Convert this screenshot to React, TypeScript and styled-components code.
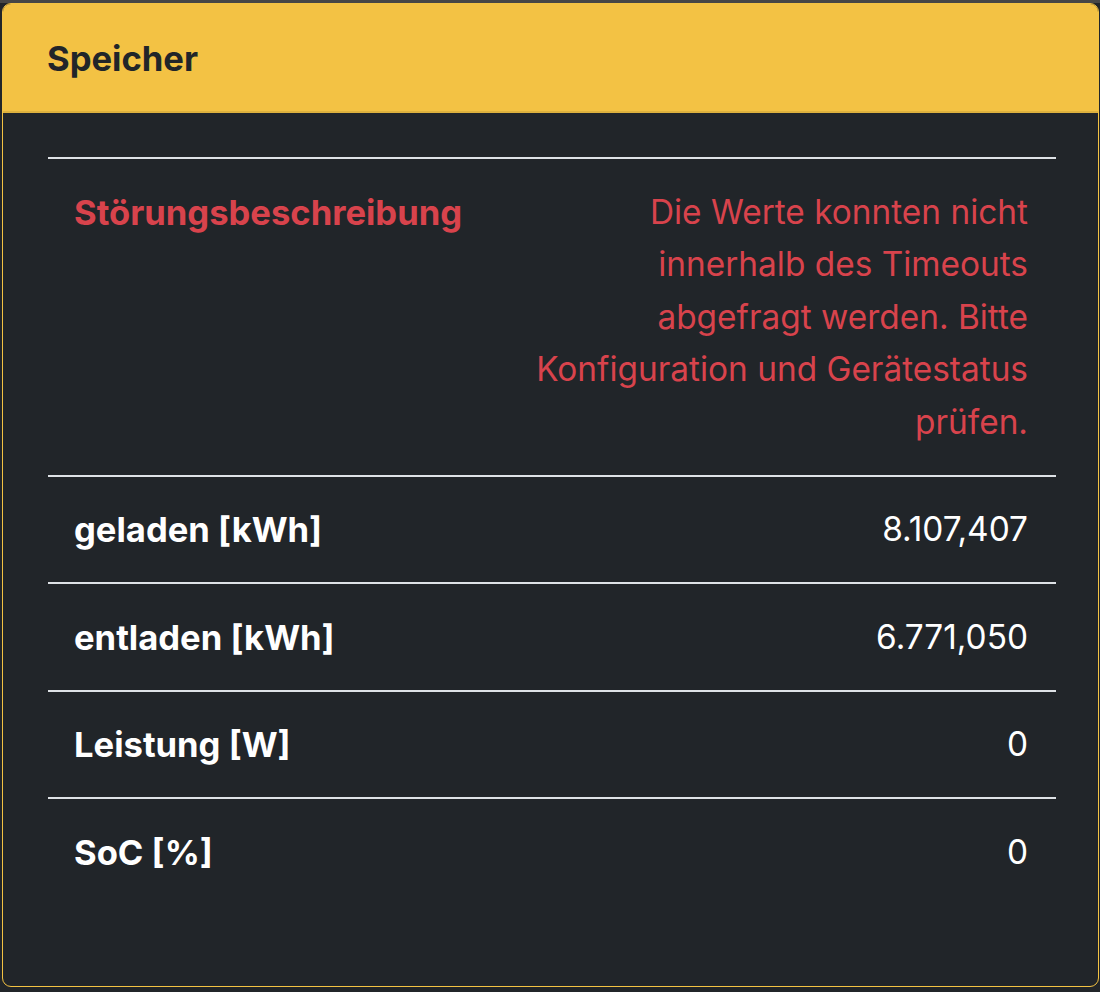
import styled, { createGlobalStyle } from "styled-components";

const GlobalStyle = createGlobalStyle`
  html, body {
    margin: 0;
    padding: 0;
    background-color: #212529;
  }
  body {
    font-family: Inter, "Noto Sans", "Liberation Sans", sans-serif;
  }
`;

const Page = styled.div`
  border-top: 3px solid #464646;
  padding: 0 1px 4px 2px;
  background-color: #212529;
`;

const Card = styled.div`
  border: 1.5px solid #f4c343;
  border-radius: 9px;
  overflow: hidden;
  background-color: #212529;
`;

const Header = styled.div`
  background-color: #f3c244;
  border-bottom: 2px solid #ddb13e;
  padding: 28px 44px 27px;
  font-size: 34.6px;
  line-height: 52px;
  font-weight: 700;
  color: #212529;
`;

const Body = styled.div`
  padding: 44px 42px 81px 45px;
`;

const Table = styled.div`
  border-top: 2px solid #dee2e6;
`;

const Row = styled.div`
  display: grid;
  grid-template-columns: 1fr 548px;
  border-bottom: 2px solid #dee2e6;
  &:last-child {
    border-bottom: none;
  }
`;

const Cell = styled.div<{ $head?: boolean; $danger?: boolean }>`
  padding: 26.5px 28px 26.5px 26px;
  font-size: ${(p) => (p.$head ? "34.6px" : "33.4px")};
  line-height: 52.5px;
  font-weight: ${(p) => (p.$head ? 700 : 400)};
  color: ${(p) => (p.$danger ? "#d8434c" : "#ffffff")};
  text-align: ${(p) => (p.$head ? "left" : "right")};
`;

const rows = [
  { key: "geladen [kWh]", value: "8.107,407" },
  { key: "entladen [kWh]", value: "6.771,050" },
  { key: "Leistung [W]", value: "0" },
  { key: "SoC [%]", value: "0" },
];

export default function App() {
  return (
    <Page>
      <GlobalStyle />
      <Card>
        <Header>Speicher</Header>
        <Body>
          <Table>
            <Row>
              <Cell $head $danger>
                Störungsbeschreibung
              </Cell>
              <Cell $danger>
                Die Werte konnten nicht innerhalb des Timeouts abgefragt
                werden. Bitte Konfiguration und Gerätestatus prüfen.
              </Cell>
            </Row>
            {rows.map((r) => (
              <Row key={r.key}>
                <Cell $head>{r.key}</Cell>
                <Cell>{r.value}</Cell>
              </Row>
            ))}
          </Table>
        </Body>
      </Card>
    </Page>
  );
}
